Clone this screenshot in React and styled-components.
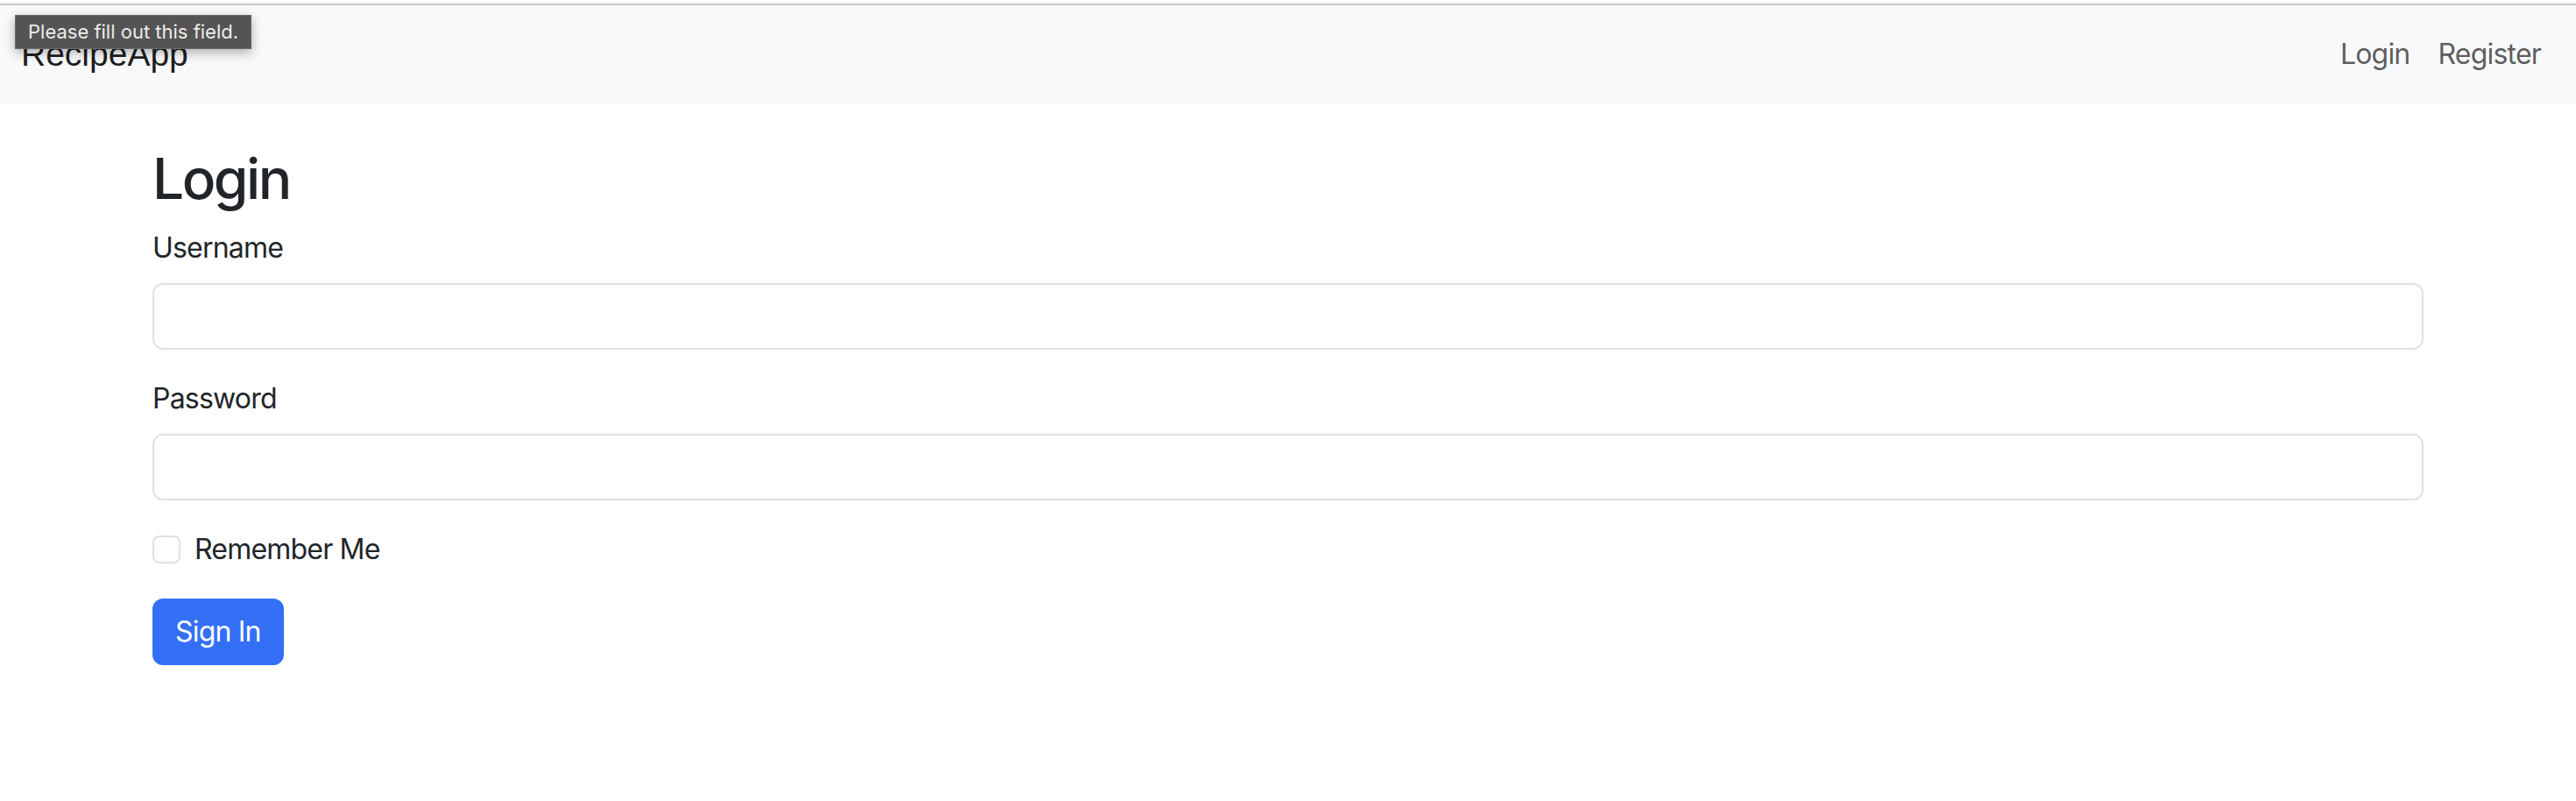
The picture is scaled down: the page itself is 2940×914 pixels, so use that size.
import React from "react";
import styled, { createGlobalStyle } from "styled-components";

const GlobalStyle = createGlobalStyle`
	* {
		box-sizing: border-box;
	}
	body {
		margin: 0;
		background: #fff;
		font-family: Inter, "Noto Sans", sans-serif;
		color: #212529;
		letter-spacing: -0.8px;
	}
`;

const Page = styled.div`
	position: relative;
	min-height: 914px;
	padding-top: 4px;
`;

const WindowEdge = styled.div`
	height: 2px;
	background: #c9c9cb;
`;

const Navbar = styled.nav`
	background: #f8f9fa;
	height: 112px;
	display: flex;
	justify-content: space-between;
	align-items: center;
	padding: 0 24px;
`;

const Brand = styled.a`
	font-family: "Liberation Sans", Arial, sans-serif;
	font-size: 39px;
	line-height: 60px;
	letter-spacing: 0;
	color: rgba(0, 0, 0, 0.9);
	text-decoration: none;
`;

const NavLinks = styled.div`
	display: flex;
`;

const NavItem = styled.a`
	font-size: 32px;
	line-height: 48px;
	padding: 16px;
	color: rgba(0, 0, 0, 0.65);
	text-decoration: none;
`;

const Container = styled.main`
	max-width: 2640px;
	margin: 48px auto 0;
	padding: 0 24px;
`;

const Title = styled.h2`
	font-size: 64px;
	font-weight: 500;
	line-height: 1.2;
	letter-spacing: -2.5px;
	margin: 0 0 16px;
`;

const Field = styled.div`
	margin-bottom: 32px;
`;

const Label = styled.label`
	display: block;
	font-size: 32px;
	line-height: 48px;
	margin-bottom: 16px;
`;

const Input = styled.input`
	display: block;
	width: 100%;
	height: 76px;
	padding: 12px 24px;
	font-size: 32px;
	font-family: inherit;
	border: 2px solid #dee2e6;
	border-radius: 12px;
	background: #fff;
	outline: none;
`;

const Check = styled.div`
	min-height: 48px;
	padding-left: 48px;
	margin-bottom: 32px;
`;

const CheckBox = styled.input`
	appearance: none;
	float: left;
	width: 32px;
	height: 32px;
	margin: 8px 0 0 -48px;
	border: 2px solid #dee2e6;
	border-radius: 8px;
	background: #fff;
`;

const CheckLabel = styled.label`
	font-size: 32px;
	line-height: 48px;
`;

const Button = styled.button`
	font-family: inherit;
	font-size: 32px;
	line-height: 48px;
	letter-spacing: -0.8px;
	padding: 12px 24px;
	border: 2px solid #3370f6;
	border-radius: 12px;
	background: #3370f6;
	color: #fff;
`;

const Bubble = styled.div`
	position: absolute;
	left: 17px;
	top: 17px;
	height: 39px;
	padding: 0 14px;
	background: #545454;
	border: 1px solid #6b6b6b;
	box-shadow: 0 4px 12px rgba(0, 0, 0, 0.3);
	color: #ececec;
	font-size: 22px;
	line-height: 37px;
	letter-spacing: 0;
	white-space: nowrap;
`;

export default function App() {
	return (
		<Page>
			<GlobalStyle />
			<WindowEdge />
			<Navbar>
				<Brand href="#">RecipeApp</Brand>
				<NavLinks>
					<NavItem href="#">Login</NavItem>
					<NavItem href="#">Register</NavItem>
				</NavLinks>
			</Navbar>
			<Container>
				<Title>Login</Title>
				<form>
					<Field>
						<Label htmlFor="username">Username</Label>
						<Input id="username" type="text" />
					</Field>
					<Field>
						<Label htmlFor="password">Password</Label>
						<Input id="password" type="password" />
					</Field>
					<Check>
						<CheckBox id="remember" type="checkbox" />
						<CheckLabel htmlFor="remember">Remember Me</CheckLabel>
					</Check>
					<Button type="button">Sign In</Button>
				</form>
			</Container>
			<Bubble>Please fill out this field.</Bubble>
		</Page>
	);
}
